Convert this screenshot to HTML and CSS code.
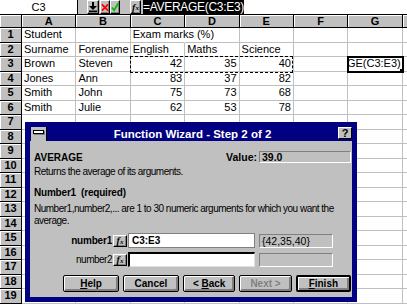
FILE: index.html
```html
<!doctype html>
<html lang="en">
<head>
    <meta charset="utf-8">
    <meta name="viewport" content="width=device-width, initial-scale=1">
    <title>Function Wizard - Step 2 of 2</title>
    <link rel="stylesheet" href="styles.css">
</head>
<body>
    <!-- formula bar -->
    <div class="formulabar">
        <div class="namebox">C3</div>
        <div class="fb-tools">
            <span class="tool raised drop">
                <svg width="8" height="10" viewBox="0 0 8 10"><rect x="3" y="0" width="2" height="4" fill="#000"/><path d="M0 4h8L4 8z" fill="#000"/><rect x="0" y="8.5" width="8" height="1.5" fill="#000"/></svg>
            </span>
            <span class="tool raised cancel">
                <svg width="9" height="9" viewBox="0 0 9 9"><path d="M1 1L8 8M8 1L1 8" stroke="#f00" stroke-width="2"/></svg>
            </span>
            <span class="tool raised enter">
                <svg width="9" height="10" viewBox="0 0 9 10"><path d="M1 5.5l2.5 3L8 1" stroke="#00c000" stroke-width="2" fill="none"/></svg>
            </span>
            <span class="tool raised fx">f<span>x</span></span>
        </div>
        <div class="formula"><span class="selected">=AVERAGE(C3:E3)</span></div>
    </div>

    <!-- worksheet -->
    <div class="sheet">
        <div class="corner"></div>
        <div class="ch">A</div><div class="ch">B</div><div class="ch">C</div><div class="ch">D</div><div class="ch">E</div><div class="ch">F</div><div class="ch">G</div><div class="ch"></div>

        <div class="rh">1</div>
        <div class="c">Student</div><div class="c"></div><div class="c spill">Exam marks (%)</div><div class="c"></div><div class="c"></div><div class="c"></div><div class="c"></div><div class="c"></div>

        <div class="rh">2</div>
        <div class="c">Surname</div><div class="c">Forename</div><div class="c">English</div><div class="c">Maths</div><div class="c">Science</div><div class="c"></div><div class="c"></div><div class="c"></div>

        <div class="rh">3</div>
        <div class="c">Brown</div><div class="c">Steven</div><div class="c num marquee">42</div><div class="c num">35</div><div class="c num">40</div><div class="c"></div><div class="c active"><span class="edit"><span>=AVERAGE(C3:E3)</span></span></div><div class="c"></div>

        <div class="rh">4</div>
        <div class="c">Jones</div><div class="c">Ann</div><div class="c num">83</div><div class="c num">37</div><div class="c num">82</div><div class="c"></div><div class="c"></div><div class="c"></div>

        <div class="rh">5</div>
        <div class="c">Smith</div><div class="c">John</div><div class="c num">75</div><div class="c num">73</div><div class="c num">68</div><div class="c"></div><div class="c"></div><div class="c"></div>

        <div class="rh">6</div>
        <div class="c">Smith</div><div class="c">Julie</div><div class="c num">62</div><div class="c num">53</div><div class="c num">78</div><div class="c"></div><div class="c"></div><div class="c"></div>

        <div class="rh">7</div><div class="c"></div><div class="c"></div><div class="c"></div><div class="c"></div><div class="c"></div><div class="c"></div><div class="c"></div><div class="c"></div>
        <div class="rh">8</div><div class="c"></div><div class="c"></div><div class="c"></div><div class="c"></div><div class="c"></div><div class="c"></div><div class="c"></div><div class="c"></div>
        <div class="rh">9</div><div class="c"></div><div class="c"></div><div class="c"></div><div class="c"></div><div class="c"></div><div class="c"></div><div class="c"></div><div class="c"></div>
        <div class="rh">10</div><div class="c"></div><div class="c"></div><div class="c"></div><div class="c"></div><div class="c"></div><div class="c"></div><div class="c"></div><div class="c"></div>
        <div class="rh">11</div><div class="c"></div><div class="c"></div><div class="c"></div><div class="c"></div><div class="c"></div><div class="c"></div><div class="c"></div><div class="c"></div>
        <div class="rh">12</div><div class="c"></div><div class="c"></div><div class="c"></div><div class="c"></div><div class="c"></div><div class="c"></div><div class="c"></div><div class="c"></div>
        <div class="rh">13</div><div class="c"></div><div class="c"></div><div class="c"></div><div class="c"></div><div class="c"></div><div class="c"></div><div class="c"></div><div class="c"></div>
        <div class="rh">14</div><div class="c"></div><div class="c"></div><div class="c"></div><div class="c"></div><div class="c"></div><div class="c"></div><div class="c"></div><div class="c"></div>
        <div class="rh">15</div><div class="c"></div><div class="c"></div><div class="c"></div><div class="c"></div><div class="c"></div><div class="c"></div><div class="c"></div><div class="c"></div>
        <div class="rh">16</div><div class="c"></div><div class="c"></div><div class="c"></div><div class="c"></div><div class="c"></div><div class="c"></div><div class="c"></div><div class="c"></div>
        <div class="rh">17</div><div class="c"></div><div class="c"></div><div class="c"></div><div class="c"></div><div class="c"></div><div class="c"></div><div class="c"></div><div class="c"></div>
        <div class="rh">18</div><div class="c"></div><div class="c"></div><div class="c"></div><div class="c"></div><div class="c"></div><div class="c"></div><div class="c"></div><div class="c"></div>
        <div class="rh">19</div><div class="c"></div><div class="c"></div><div class="c"></div><div class="c"></div><div class="c"></div><div class="c"></div><div class="c"></div><div class="c"></div>
    </div>

    <!-- function wizard dialog -->
    <div class="wizard">
        <div class="titlebar">
            <span class="sysmenu"><span></span></span>
            <span class="title">Function Wizard - Step 2 of 2</span>
            <span class="helpbtn">?</span>
        </div>
        <div class="wizard-body">
            <div class="fn-row">
                <span class="fn-name">AVERAGE</span>
                <span class="value-label">Value:</span>
                <span class="readout value">39.0</span>
            </div>
            <p class="fn-desc">Returns the average of its arguments.</p>
            <p class="arg-name">Number1&nbsp; (required)</p>
            <p class="arg-desc">Number1,number2,... are 1 to 30 numeric arguments for which you want the<br>average.</p>
            <div class="arg-row">
                <label class="arg-label required">number1</label>
                <span class="fx-btn">f<span>x</span></span>
                <span class="arg-input">C3:E3</span>
                <span class="readout result">{42,35,40}</span>
            </div>
            <div class="arg-row second">
                <label class="arg-label">number2</label>
                <span class="fx-btn">f<span>x</span></span>
                <span class="arg-input focused"></span>
                <span class="readout result"></span>
            </div>
            <div class="buttons">
                <button class="btn help"><u>H</u>elp</button>
                <button class="btn cancel-btn">Cancel</button>
                <button class="btn back">&lt; <u>B</u>ack</button>
                <button class="btn next" disabled>Next &gt;</button>
                <button class="btn finish default"><u>F</u>inish</button>
            </div>
        </div>
    </div>
</body>
</html>
```

FILE: styles.css
```css
* {
    box-sizing: border-box;
}

body {
    margin: 0;
    width: 407px;
    height: 305px;
    overflow: hidden;
    background: #fff;
    color: #000;
    font-family: "Liberation Sans", Arial, sans-serif;
    font-size: 11px;
}

/* formula bar */
.formulabar {
    display: flex;
    height: 15px;
    background: #c0c0c0;
    border-bottom: 1px solid #000;
}

.namebox {
    width: 78px;
    background: #fff;
    border-right: 1px solid #000;
    text-align: center;
    line-height: 14px;
}

.fb-tools {
    display: flex;
    padding-left: 9px;
}

.tool {
    display: flex;
    align-items: center;
    justify-content: center;
}

.raised {
    border: 1px solid;
    border-color: #fff #000 #000 #fff;
    box-shadow: inset -1px -1px 0 #808080;
}

.drop {
    width: 12px;
    margin-right: 1px;
}

.cancel,
.enter {
    width: 10px;
}

.enter {
    margin-right: 10px;
}

.fx,
.fx-btn {
    font-family: "Liberation Serif", serif;
    font-style: italic;
    font-weight: bold;
    font-size: 10px;
    letter-spacing: 0;
}

.fx {
    width: 11px;
}

.fx span,
.fx-btn span {
    font-size: 7px;
    position: relative;
    top: 1px;
}

.formula {
    flex: 1;
    margin-left: 2px;
    background: #fff;
    font-size: 12px;
    letter-spacing: -0.3px;
    line-height: 14px;
    white-space: nowrap;
}

.formula .selected {
    display: inline-block;
    background: #000;
    color: #fff;
}

/* worksheet */
.sheet {
    display: grid;
    grid-template-columns: 22px repeat(7, 54.4px) 1fr;
    grid-template-rows: 13px;
    grid-auto-rows: 14.5px;
}

.corner,
.ch,
.rh {
    background: #c0c0c0;
    border-right: 1px solid #000;
    border-bottom: 1px solid #000;
    box-shadow: inset 1px 1px 0 #fff;
    font-weight: bold;
    text-align: center;
}

.ch {
    line-height: 12px;
}

.rh {
    line-height: 13.5px;
}

.c {
    border-right: 1px solid #c0c0c0;
    border-bottom: 1px solid #c0c0c0;
    padding: 0 2px 0 2px;
    line-height: 13.5px;
    white-space: nowrap;
    overflow: hidden;
}

.c.num {
    text-align: right;
}

.c.spill {
    overflow: visible;
    border-right-color: transparent;
}

.marquee {
    position: relative;
    overflow: visible;
}

.marquee::before {
    content: "";
    position: absolute;
    left: -1px;
    top: -1px;
    width: calc(300% + 1px);
    height: calc(100% + 1px);
    border: 1px dashed #000;
}

.active {
    position: relative;
    padding: 0 1px 0 0;
    outline: 2px solid #000;
    outline-offset: -1px;
    overflow: visible;
}

.active .edit {
    display: flex;
    justify-content: flex-end;
    height: 100%;
    overflow: hidden;
}

.active .edit span {
    flex-shrink: 0;
}

.active::after {
    content: "";
    position: absolute;
    right: -2px;
    bottom: -2px;
    width: 4px;
    height: 4px;
    background: #000;
}

/* function wizard */
.wizard {
    position: absolute;
    left: 25px;
    top: 122px;
    width: 332px;
    height: 180px;
    display: flex;
    flex-direction: column;
    background: #c0c0c0;
    border: 5px solid #000080;
}

.titlebar {
    display: flex;
    height: 14px;
    background: #000080;
    color: #fff;
}

.sysmenu {
    width: 16px;
    margin-left: 1px;
    padding-top: 3px;
    display: flex;
    justify-content: center;
    background: #c0c0c0;
    border-right: 1px solid #000;
}

.sysmenu span {
    width: 11px;
    height: 4px;
    background: #fff;
    border: 1px solid #000;
    box-shadow: 1px 1px 0 #808080;
}

.title {
    flex: 1;
    text-align: center;
    font-weight: bold;
    font-size: 11.5px;
    line-height: 14px;
}

.helpbtn {
    width: 14px;
    height: 12px;
    background: #c0c0c0;
    color: #000;
    border: 1px solid;
    border-color: #fff #000 #000 #fff;
    font-weight: bold;
    font-size: 11px;
    line-height: 10px;
    text-align: center;
}

.wizard-body {
    flex: 1;
    padding: 10px 1px 0 4px;
    font-size: 10px;
    letter-spacing: -0.5px;
}

.wizard-body p {
    margin: 0;
    line-height: 12px;
    white-space: nowrap;
}

.fn-row {
    display: flex;
    align-items: center;
    height: 12px;
}

.fn-name {
    flex: 1;
    font-weight: bold;
    letter-spacing: 0;
}

.value-label {
    margin-right: 2px;
    font-weight: bold;
    font-size: 10.5px;
    letter-spacing: 0;
}

.readout {
    height: 14px;
    padding-left: 2px;
    background: #c0c0c0;
    border: 1px solid;
    border-color: #808080 #fff #fff #808080;
    font-size: 10.5px;
    letter-spacing: 0;
    line-height: 12px;
}

.value {
    width: 92px;
    height: 12px;
    font-weight: bold;
    line-height: 10px;
}

.wizard-body .fn-desc {
    margin-top: 3px;
}

.wizard-body .arg-name {
    margin-top: 9px;
    font-weight: bold;
    letter-spacing: -0.2px;
}

.wizard-body .arg-desc {
    margin-top: 4px;
}

.arg-row {
    display: flex;
    align-items: center;
    height: 15px;
    margin-top: 6px;
}

.arg-row.second {
    margin-top: 4px;
}

.arg-label {
    width: 78px;
    margin-right: 1px;
    text-align: right;
}

.arg-label.required {
    font-weight: bold;
    letter-spacing: -0.2px;
}

.fx-btn {
    width: 14px;
    height: 12px;
    display: flex;
    justify-content: center;
    line-height: 10px;
    background: #c0c0c0;
    border: 1px solid;
    border-color: #fff #000 #000 #fff;
    box-shadow: inset -1px -1px 0 #808080;
}

.arg-input {
    width: 127px;
    height: 15px;
    margin-left: 1px;
    padding-left: 3px;
    background: #fff;
    border: 1px solid #808080;
    font-weight: bold;
    letter-spacing: 0;
    line-height: 13px;
}

.arg-input.focused {
    border-top: 2px solid #000;
    border-left: 2px solid #000;
    border-right-color: #dfdfdf;
    border-bottom-color: #dfdfdf;
}

.result {
    width: 74px;
    margin-left: 4px;
}

.buttons {
    display: flex;
    gap: 4px;
    margin-top: 8px;
    padding-left: 29px;
}

.btn {
    height: 17px;
    padding: 0;
    background: #c0c0c0;
    color: #000;
    border: 1px solid #000;
    border-radius: 2px;
    box-shadow: inset 1px 1px 0 #fff, inset -2px -2px 0 #808080;
    font-family: "Liberation Sans", Arial, sans-serif;
    font-weight: bold;
    font-size: 10px;
}

.help,
.cancel-btn {
    width: 62px;
}

.back,
.next {
    width: 58px;
}

.finish {
    width: 61px;
}

.btn.default {
    border-width: 2px;
}

.btn:disabled {
    color: #808080;
}
```
